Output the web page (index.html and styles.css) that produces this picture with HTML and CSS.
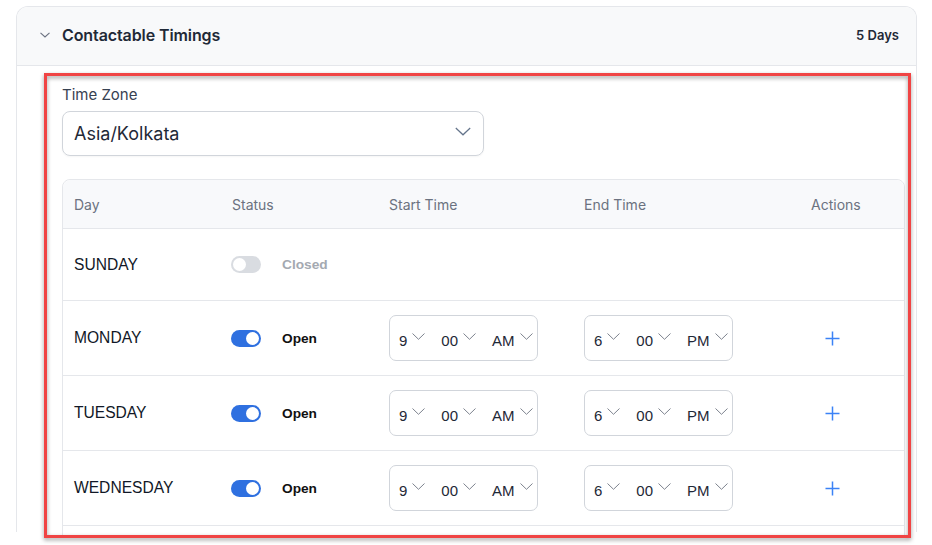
FILE: index.html
```html
<!DOCTYPE html>
<html>
<head>
<meta charset="utf-8">
<link rel="stylesheet" href="styles.css">
</head>
<body>
<div class="card">
  <div class="card-head">
    <div class="head-left">
      <svg class="head-chev" width="10" height="6" viewBox="0 0 10 6"><path d="M0.5 0.8 L5 5 L9.5 0.8" fill="none" stroke="#6b7280" stroke-width="1.1"/></svg>
      <span class="title">Contactable Timings</span>
    </div>
    <span class="days">5 Days</span>
  </div>
  <div class="card-body">
    <div class="highlight">
      <div class="hl-body">
        <div class="tz-label">Time Zone</div>
        <div class="tz-select">
          <span>Asia/Kolkata</span>
          <svg width="16" height="9" viewBox="0 0 16 9"><path d="M0.8 1 L8 7.8 L15.2 1" fill="none" stroke="#64748b" stroke-width="1.2"/></svg>
        </div>
        <div class="table">
          <div class="row head">
            <span>Day</span><span>Status</span><span>Start Time</span><span>End Time</span><span>Actions</span>
          </div>
          <div class="row short">
            <span class="day">SUNDAY</span>
            <div class="status"><span class="toggle off"><span class="knob"></span></span><span class="st closed">Closed</span></div>
            <span></span><span></span><span></span>
          </div>
          <div class="row">
            <span class="day">MONDAY</span>
            <div class="status"><span class="toggle on"><span class="knob"></span></span><span class="st">Open</span></div>
            <div class="tbox"><span class="seg"><span class="tv">9</span><svg class="chev" viewBox="0 0 13 7"><path d="M0.5 0.5 L6.5 6.3 L12.5 0.5"/></svg></span><span class="seg"><span class="tv">00</span><svg class="chev" viewBox="0 0 13 7"><path d="M0.5 0.5 L6.5 6.3 L12.5 0.5"/></svg></span><span class="seg"><span class="tv">AM</span><svg class="chev" viewBox="0 0 13 7"><path d="M0.5 0.5 L6.5 6.3 L12.5 0.5"/></svg></span></div>
            <div class="tbox"><span class="seg"><span class="tv">6</span><svg class="chev" viewBox="0 0 13 7"><path d="M0.5 0.5 L6.5 6.3 L12.5 0.5"/></svg></span><span class="seg"><span class="tv">00</span><svg class="chev" viewBox="0 0 13 7"><path d="M0.5 0.5 L6.5 6.3 L12.5 0.5"/></svg></span><span class="seg"><span class="tv">PM</span><svg class="chev" viewBox="0 0 13 7"><path d="M0.5 0.5 L6.5 6.3 L12.5 0.5"/></svg></span></div>
            <span class="plus"><svg width="15" height="15" viewBox="0 0 15 15"><path d="M7.5 0.5 V14.5 M0.5 7.5 H14.5" stroke="#3b82f6" stroke-width="1.5"/></svg></span>
          </div>
          <div class="row">
            <span class="day">TUESDAY</span>
            <div class="status"><span class="toggle on"><span class="knob"></span></span><span class="st">Open</span></div>
            <div class="tbox"><span class="seg"><span class="tv">9</span><svg class="chev" viewBox="0 0 13 7"><path d="M0.5 0.5 L6.5 6.3 L12.5 0.5"/></svg></span><span class="seg"><span class="tv">00</span><svg class="chev" viewBox="0 0 13 7"><path d="M0.5 0.5 L6.5 6.3 L12.5 0.5"/></svg></span><span class="seg"><span class="tv">AM</span><svg class="chev" viewBox="0 0 13 7"><path d="M0.5 0.5 L6.5 6.3 L12.5 0.5"/></svg></span></div>
            <div class="tbox"><span class="seg"><span class="tv">6</span><svg class="chev" viewBox="0 0 13 7"><path d="M0.5 0.5 L6.5 6.3 L12.5 0.5"/></svg></span><span class="seg"><span class="tv">00</span><svg class="chev" viewBox="0 0 13 7"><path d="M0.5 0.5 L6.5 6.3 L12.5 0.5"/></svg></span><span class="seg"><span class="tv">PM</span><svg class="chev" viewBox="0 0 13 7"><path d="M0.5 0.5 L6.5 6.3 L12.5 0.5"/></svg></span></div>
            <span class="plus"><svg width="15" height="15" viewBox="0 0 15 15"><path d="M7.5 0.5 V14.5 M0.5 7.5 H14.5" stroke="#3b82f6" stroke-width="1.5"/></svg></span>
          </div>
          <div class="row">
            <span class="day">WEDNESDAY</span>
            <div class="status"><span class="toggle on"><span class="knob"></span></span><span class="st">Open</span></div>
            <div class="tbox"><span class="seg"><span class="tv">9</span><svg class="chev" viewBox="0 0 13 7"><path d="M0.5 0.5 L6.5 6.3 L12.5 0.5"/></svg></span><span class="seg"><span class="tv">00</span><svg class="chev" viewBox="0 0 13 7"><path d="M0.5 0.5 L6.5 6.3 L12.5 0.5"/></svg></span><span class="seg"><span class="tv">AM</span><svg class="chev" viewBox="0 0 13 7"><path d="M0.5 0.5 L6.5 6.3 L12.5 0.5"/></svg></span></div>
            <div class="tbox"><span class="seg"><span class="tv">6</span><svg class="chev" viewBox="0 0 13 7"><path d="M0.5 0.5 L6.5 6.3 L12.5 0.5"/></svg></span><span class="seg"><span class="tv">00</span><svg class="chev" viewBox="0 0 13 7"><path d="M0.5 0.5 L6.5 6.3 L12.5 0.5"/></svg></span><span class="seg"><span class="tv">PM</span><svg class="chev" viewBox="0 0 13 7"><path d="M0.5 0.5 L6.5 6.3 L12.5 0.5"/></svg></span></div>
            <span class="plus"><svg width="15" height="15" viewBox="0 0 15 15"><path d="M7.5 0.5 V14.5 M0.5 7.5 H14.5" stroke="#3b82f6" stroke-width="1.5"/></svg></span>
          </div>
          <div class="row-rest"></div>
        </div>
      </div>
    </div>
  </div>
</div>
</body>
</html>
```
FILE: styles.css
```css
* { box-sizing: border-box; }
html { height: 100%; margin: 0; padding: 0; background: #fff; }
body {
  margin: 0;
  height: 545px;
  min-height: 100%;
  background: #fff;
  font-family: Inter, "Noto Sans", sans-serif;
  color: #1f2937;
  padding-top: 6px;
  padding-left: 16px;
}
.card {
  width: 901px;
  height: 526px;
  border: 1px solid #e5e7eb;
  border-bottom: none;
  border-radius: 12px 12px 0 0;
  background: #fff;
}
.card-head {
  height: 59px;
  border-bottom: 1px solid #e5e7eb;
  background: #f8f9fa;
  border-radius: 11px 11px 0 0;
  display: flex;
  align-items: center;
  justify-content: space-between;
  padding: 0 17px 3px 23px;
}
.head-left { display: flex; align-items: center; gap: 12px; }
.head-chev { display: block; margin-top: 1px; }
.title { font-size: 16px; font-weight: 600; color: #1f2937; letter-spacing: -0.1px; }
.days { font-size: 13px; font-weight: 600; color: #1f2937; }
.card-body { padding: 7px 5px 0 27px; }
.highlight {
  position: relative;
  height: 465px;
}
.highlight::after {
  content: "";
  position: absolute;
  inset: 0;
  border: 3px solid #f04444;
  filter: drop-shadow(0 2px 2px rgba(0,0,0,0.4));
  pointer-events: none;
}
.hl-body {
  height: 100%;
  overflow: hidden;
  padding: 12px 6px 0 18px;
  background: #fff;
}
.tz-label { font-size: 15px; line-height: 20px; color: #374151; margin-bottom: 6px; }
.tz-select {
  width: 422px;
  height: 45px;
  border: 1px solid #d1d5db;
  border-radius: 8px;
  display: flex;
  align-items: center;
  justify-content: space-between;
  padding: 0 12px 0 11px;
  font-size: 18px;
  color: #1f2937;
  box-shadow: 0 1px 2px rgba(0,0,0,0.04);
}
.tz-select svg { display: block; margin-top: -5px; }
.table {
  margin-top: 23px;
  border: 1px solid #e5e7eb;
  border-radius: 8px;
}
.row {
  display: grid;
  grid-template-columns: 157px 158px 195px 227px 1fr;
  align-items: center;
  padding-left: 11px;
  height: 75px;
  border-bottom: 1px solid #e5e7eb;
}
.row.head {
  height: 49px;
  padding-top: 1px;
  background: #f8f9fb;
  border-radius: 8px 8px 0 0;
  font-size: 14px;
  color: #6b7280;
}
.row.head span:nth-child(2) { margin-left: 1px; }
.row.short { height: 72px; }
.row-rest { height: 40px; }
.day { font-family: "Liberation Sans", Arial, sans-serif; font-size: 15.6px; color: #111827; }
.status { display: flex; align-items: center; gap: 21px; }
.toggle {
  width: 30px;
  height: 17px;
  border-radius: 9px;
  display: flex;
  align-items: center;
  padding: 0 2px;
}
.toggle.on { background: #2f70e0; justify-content: flex-end; }
.toggle.off { background: #d9dce1; justify-content: flex-start; }
.knob { width: 13px; height: 13px; border-radius: 50%; background: #fff; }
.st { font-family: "Liberation Sans", Arial, sans-serif; font-size: 13.7px; font-weight: 700; color: #111; }
.st.closed { color: #a4a9b1; }
.tbox {
  width: 149px;
  height: 46px;
  border: 1px solid #d1d5db;
  border-radius: 7px;
  display: flex;
  align-items: center;
  padding-left: 9px;
  font-family: "Liberation Sans", Arial, sans-serif;
  font-size: 15px;
  color: #1f2937;
}
.seg { display: flex; align-items: center; gap: 5px; margin-right: 16px; }
.seg:last-child { margin-right: 0; }
.tv { margin-top: 5px; }
.chev {
  display: block;
  width: 13px;
  height: 7px;
  margin-top: -3px;
  fill: none;
  stroke: #7d838e;
  stroke-width: 1;
}
.plus { display: flex; margin-left: 14px; }
.plus svg { display: block; }
```
